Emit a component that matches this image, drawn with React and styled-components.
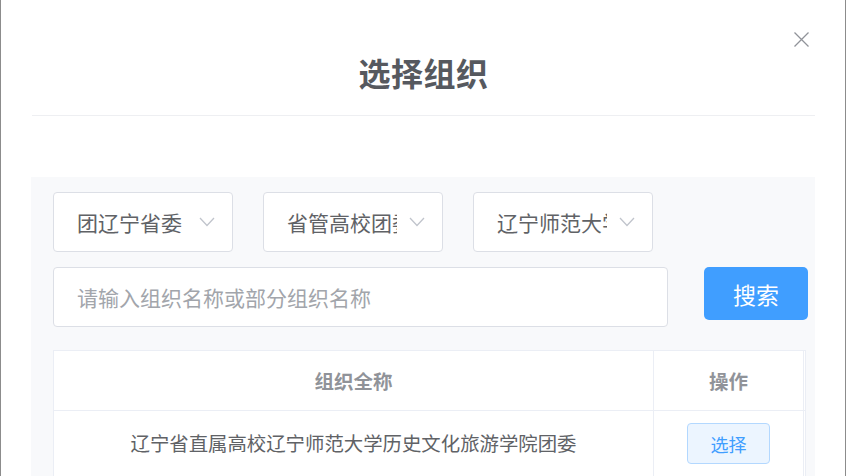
import React from "react";
import styled, { createGlobalStyle } from "styled-components";

const Global = createGlobalStyle`
  html, body { margin: 0; padding: 0; background: #ffffff; }
  body { font-family: "Noto Sans CJK SC", "Noto Sans", "Liberation Sans", sans-serif; }
  * { box-sizing: border-box; }
`;

const Dialog = styled.div`
  position: relative;
  width: 846px;
  height: 476px;
  overflow: hidden;
  background: #ffffff;
  border-left: 1px solid #8c8c8c;
  border-right: 1px solid #8c8c8c;
`;

const Header = styled.div`
  margin: 0 30px 0 31px;
  padding: 50px 0 21px;
  border-bottom: 1px solid #eeeff2;
  text-align: center;
`;

const Title = styled.h1`
  margin: 0;
  font-size: 32px;
  line-height: 44px;
  font-weight: 700;
  color: #56595f;
  letter-spacing: 0.5px;
`;

const Close = styled.button`
  position: absolute;
  top: 31px;
  right: 35px;
  width: 17px;
  height: 17px;
  padding: 0;
  border: none;
  background: transparent;
  cursor: pointer;
  display: flex;
`;

const Panel = styled.div`
  margin: 61px 30px 0 30px;
  background: #f8f9fb;
  padding: 15px 0 0 22px;
  height: 300px;
`;

const SelectRow = styled.div`
  display: flex;
  gap: 30px;
`;

const Select = styled.div`
  width: 180px;
  height: 60px;
  background: #ffffff;
  border: 1px solid #dcdfe6;
  border-radius: 4px;
  display: flex;
  align-items: center;
  padding: 0 17px 0 23px;
  gap: 12px;
`;

const SelectText = styled.span`
  flex: 1;
  overflow: hidden;
  white-space: nowrap;
  font-size: 21px;
  color: #606266;
`;

const SearchRow = styled.div`
  display: flex;
  align-items: flex-start;
  margin-top: 15px;
  gap: 36px;
`;

const Input = styled.input`
  width: 615px;
  height: 60px;
  border: 1px solid #dcdfe6;
  border-radius: 4px;
  background: #ffffff;
  padding: 0 23px;
  font-family: inherit;
  font-size: 21px;
  color: #606266;
  outline: none;
  &::placeholder { color: #a2a5ab; }
`;

const SearchButton = styled.button`
  width: 104px;
  height: 53px;
  border: none;
  border-radius: 5px;
  background: #409eff;
  color: #ffffff;
  font-family: inherit;
  font-size: 23px;
  cursor: pointer;
`;

const Table = styled.div`
  margin-top: 23px;
  width: 753px;
  background: #ffffff;
  border-top: 1px solid #ebeef5;
  border-left: 1px solid #ebeef5;
  border-right: 1px solid #ebeef5;
  display: grid;
  grid-template-columns: 600px 150px 1fr;
`;

const Cell = styled.div`
  height: ${(p) => (p.$head ? "60px" : "70px")};
  display: flex;
  align-items: ${(p) => (p.$head ? "center" : "flex-start")};
  justify-content: center;
  padding-top: ${(p) => (p.$head ? "0" : "12px")};
  border-bottom: 1px solid #ebeef5;
  border-right: ${(p) => (p.$last ? "none" : "1px solid #ebeef5")};
  font-size: ${(p) => (p.$head ? "19.5px" : "19.4px")};
  font-weight: ${(p) => (p.$head ? 700 : 400)};
  color: ${(p) => (p.$head ? "#909399" : "#606266")};
  line-height: ${(p) => (p.$head ? "normal" : "40px")};
`;

const Gutter = styled.div`
  border-bottom: ${(p) => (p.$head ? "1px solid #ebeef5" : "none")};
`;

const PickButton = styled.button`
  width: 83px;
  height: 41px;
  border: 1px solid #b3d8ff;
  border-radius: 4px;
  background: #ecf5ff;
  color: #409eff;
  font-family: inherit;
  font-size: 18px;
  cursor: pointer;
`;

const Chevron = () => (
  <svg width="16" height="10" viewBox="0 0 16 10" fill="none">
    <path d="M1 1 L8 8.5 L15 1" stroke="#c0c4cc" strokeWidth="1.3" />
  </svg>
);

const selects = ["团辽宁省委", "省管高校团委", "辽宁师范大学团委"];

export default function App() {
  return (
    <>
      <Global />
      <Dialog>
        <Header>
          <Title>选择组织</Title>
        </Header>
        <Close aria-label="close">
          <svg width="17" height="17" viewBox="0 0 17 17">
            <path d="M1.5 1.5 L15.5 15.5 M15.5 1.5 L1.5 15.5" stroke="#909399" strokeWidth="1.3" />
          </svg>
        </Close>
        <Panel>
          <SelectRow>
            {selects.map((s) => (
              <Select key={s}>
                <SelectText>{s}</SelectText>
                <Chevron />
              </Select>
            ))}
          </SelectRow>
          <SearchRow>
            <Input placeholder="请输入组织名称或部分组织名称" />
            <SearchButton>搜索</SearchButton>
          </SearchRow>
          <Table>
            <Cell $head>组织全称</Cell>
            <Cell $head>操作</Cell>
            <Gutter $head />
            <Cell>辽宁省直属高校辽宁师范大学历史文化旅游学院团委</Cell>
            <Cell>
              <PickButton>选择</PickButton>
            </Cell>
            <Gutter />
          </Table>
        </Panel>
      </Dialog>
    </>
  );
}
